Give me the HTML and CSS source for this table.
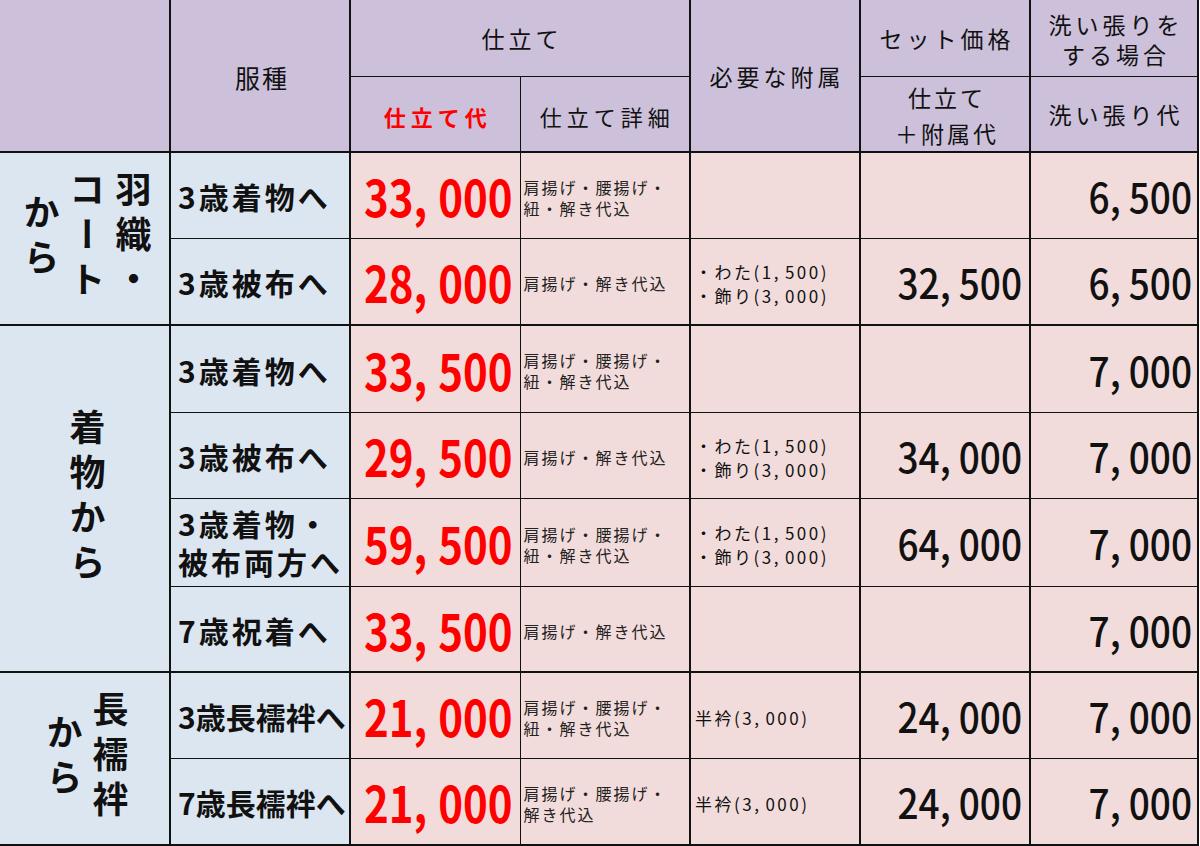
FILE: index.html
```
<!DOCTYPE html>
<html lang="ja">
<head>
<meta charset="utf-8">
<title>仕立て価格表</title>
<link rel="stylesheet" href="styles.css">
</head>
<body>
<table class="price">
  <colgroup>
    <col class="w-group">
    <col class="w-kind">
    <col class="w-std">
    <col class="w-std">
    <col class="w-std">
    <col class="w-std">
    <col class="w-last">
  </colgroup>
  <thead>
    <tr class="hr1">
      <th class="corner" rowspan="2"></th>
      <th class="h-kind tv" rowspan="2">服種</th>
      <th class="tv" colspan="2">仕立て</th>
      <th class="tv" rowspan="2">必要な附属</th>
      <th class="tv">セット価格</th>
      <th class="tv two">洗い張りを<br>する場合</th>
    </tr>
    <tr class="hr2">
      <th class="red tv">仕立て代</th>
      <th class="thin-r">仕立て詳細</th>
      <th class="tv two2">仕立て<br>＋附属代</th>
      <th class="tv">洗い張り代</th>
    </tr>
  </thead>
  <tbody>
    <tr class="r86 gtop">
      <td class="group" rowspan="2"><div class="vwrap"><div class="vt">羽織・<br>コート<br>から</div></div></td>
      <td class="kind">3歳着物へ</td>
      <td class="fee"><span class="big">33<span class="cm">,</span>000</span></td>
      <td class="detail">肩揚げ・腰揚げ・<br>紐・解き代込</td>
      <td class="acc"></td>
      <td class="set"></td>
      <td class="wash"><span class="mid">6<span class="cm">,</span>500</span></td>
    </tr>
    <tr class="r87 gend">
      <td class="kind">3歳被布へ</td>
      <td class="fee"><span class="big">28<span class="cm">,</span>000</span></td>
      <td class="detail">肩揚げ・解き代込</td>
      <td class="acc">・わた(1<span class="cm">,</span>500)<br>・飾り(3<span class="cm">,</span>000)</td>
      <td class="set"><span class="mid">32<span class="cm">,</span>500</span></td>
      <td class="wash"><span class="mid">6<span class="cm">,</span>500</span></td>
    </tr>
    <tr class="r87">
      <td class="group" rowspan="4"><div class="vwrap"><div class="vt">着物から</div></div></td>
      <td class="kind">3歳着物へ</td>
      <td class="fee"><span class="big">33<span class="cm">,</span>500</span></td>
      <td class="detail">肩揚げ・腰揚げ・<br>紐・解き代込</td>
      <td class="acc"></td>
      <td class="set"></td>
      <td class="wash"><span class="mid">7<span class="cm">,</span>000</span></td>
    </tr>
    <tr class="r86">
      <td class="kind">3歳被布へ</td>
      <td class="fee"><span class="big">29<span class="cm">,</span>500</span></td>
      <td class="detail">肩揚げ・解き代込</td>
      <td class="acc">・わた(1<span class="cm">,</span>500)<br>・飾り(3<span class="cm">,</span>000)</td>
      <td class="set"><span class="mid">34<span class="cm">,</span>000</span></td>
      <td class="wash"><span class="mid">7<span class="cm">,</span>000</span></td>
    </tr>
    <tr class="r88">
      <td class="kind two-line">3歳着物・<br>被布両方へ</td>
      <td class="fee"><span class="big">59<span class="cm">,</span>500</span></td>
      <td class="detail">肩揚げ・腰揚げ・<br>紐・解き代込</td>
      <td class="acc">・わた(1<span class="cm">,</span>500)<br>・飾り(3<span class="cm">,</span>000)</td>
      <td class="set"><span class="mid">64<span class="cm">,</span>000</span></td>
      <td class="wash"><span class="mid">7<span class="cm">,</span>000</span></td>
    </tr>
    <tr class="r86 gend">
      <td class="kind">7歳祝着へ</td>
      <td class="fee"><span class="big">33<span class="cm">,</span>500</span></td>
      <td class="detail">肩揚げ・解き代込</td>
      <td class="acc"></td>
      <td class="set"></td>
      <td class="wash"><span class="mid">7<span class="cm">,</span>000</span></td>
    </tr>
    <tr class="r86">
      <td class="group" rowspan="2"><div class="vwrap"><div class="vt">長襦袢<br>から</div></div></td>
      <td class="kind tight">3歳長襦袢へ</td>
      <td class="fee"><span class="big">21<span class="cm">,</span>000</span></td>
      <td class="detail">肩揚げ・腰揚げ・<br>紐・解き代込</td>
      <td class="acc">半衿(3<span class="cm">,</span>000)</td>
      <td class="set"><span class="mid">24<span class="cm">,</span>000</span></td>
      <td class="wash"><span class="mid">7<span class="cm">,</span>000</span></td>
    </tr>
    <tr class="r87 gend">
      <td class="kind tight">7歳長襦袢へ</td>
      <td class="fee"><span class="big">21<span class="cm">,</span>000</span></td>
      <td class="detail">肩揚げ・腰揚げ・<br>解き代込</td>
      <td class="acc">半衿(3<span class="cm">,</span>000)</td>
      <td class="set"><span class="mid">24<span class="cm">,</span>000</span></td>
      <td class="wash"><span class="mid">7<span class="cm">,</span>000</span></td>
    </tr>
  </tbody>
</table>
</body>
</html>
```
FILE: styles.css
```
html, body {
  margin: 0;
  padding: 0;
  background: #ffffff;
}

body {
  font-family: "Noto Sans CJK JP", "Noto Sans", sans-serif;
  color: #111;
}

.price {
  border-collapse: collapse;
  table-layout: fixed;
  width: 1198px;
}

.w-group { width: 170px; }
.w-kind { width: 180px; }
.w-std { width: 170px; }
.w-last { width: 168px; }

.price th,
.price td {
  border: 1px solid #111;
  border-left-width: 2px;
  border-right-width: 2px;
  padding: 0;
  vertical-align: middle;
  overflow: hidden;
}

/* header */
.price th {
  background: #ccc0da;
  font-weight: 400;
  font-size: 23px;
  letter-spacing: 4px;
  padding-left: 4px;
  line-height: 30px;
  text-align: center;
  white-space: nowrap;
  color: #111;
}

.hr1 { height: 76px; }
.hr2 { height: 76px; }
.hr2 th { border-bottom-width: 2px; }

.price th.corner {
  border-top: none;
  border-left: none;
  border-bottom-width: 2px;
}

.price th.h-kind {
  font-size: 25px;
  letter-spacing: 2px;
  border-bottom-width: 2px;
  padding-top: 2px;
}

.hr1 th { border-top: none; }
.hr1 th[rowspan] { border-bottom-width: 2px; }

.price th.red {
  color: #ff0000;
  font-weight: 700;
  font-size: 22px;
  letter-spacing: 5px;
  padding-left: 5px;
  padding-top: 4px;
  border-right-width: 1px;
}

.price th.thin-r {
  border-left-width: 1px;
  font-size: 22px;
  letter-spacing: 5px;
  padding-left: 5px;
  padding-top: 4px;
}

.price th.two {
  line-height: 30px;
  font-size: 23px;
  letter-spacing: 4px;
  padding-left: 4px;
  padding-top: 2px;
}

.price th.two2 {
  line-height: 36px;
  font-size: 23px;
  letter-spacing: 3px;
  padding-top: 2px;
}

/* body rows */
.r86 { height: 86px; }
.r87 { height: 87px; }
.r88 { height: 88px; }

.gend td { border-bottom-width: 2px; }
.price td.group { border-bottom-width: 2px; }

.price td.group {
  background: #dce6f1;
  border-left: none;
}

.vwrap {
  display: flex;
  justify-content: center;
  align-items: center;
  padding-left: 6px;
}

.vt {
  writing-mode: vertical-rl;
  text-align: center;
  font-size: 36px;
  font-weight: 700;
  letter-spacing: 9px;
  line-height: 46px;
  color: #111;
}

.price td.kind {
  background: #dce6f1;
  font-size: 30px;
  font-weight: 700;
  letter-spacing: 3px;
  line-height: 38px;
  padding-left: 7px;
  padding-top: 2px;
  white-space: nowrap;
}

.price td.kind.tight { letter-spacing: 0; }
.price td.kind.two-line { padding-top: 0; }

.price td.fee,
.price td.detail,
.price td.acc,
.price td.set,
.price td.wash {
  background: #f2dcdb;
}

.price td.fee {
  text-align: right;
  padding-right: 7px;
  border-right-width: 1px;
}

.big {
  display: inline-block;
  font-family: "Noto Sans CJK JP", sans-serif;
  font-size: 42px;
  font-weight: 700;
  color: #ff0000;
  line-height: 1;
  transform: scaleY(1.2);
  padding-top: 2px;
}

.big .cm { margin-right: 11px; }

.price td.detail {
  font-size: 16px;
  letter-spacing: 2px;
  line-height: 21px;
  padding-left: 3px;
  padding-top: 5px;
  color: #222;
  white-space: nowrap;
  border-left-width: 1px;
}

.price td.acc {
  font-size: 17px;
  letter-spacing: 2.5px;
  line-height: 24px;
  padding-left: 4px;
  padding-top: 5px;
  color: #111;
  white-space: nowrap;
}

.acc .cm { margin-right: 4px; }

.price td.set {
  text-align: right;
  padding-right: 7px;
}

.price td.wash {
  text-align: right;
  padding-right: 5px;
}

.mid {
  display: inline-block;
  font-family: "Noto Sans CJK JP", sans-serif;
  font-size: 37px;
  font-weight: 500;
  line-height: 1;
  color: #111;
  transform: scaleY(1.1);
  padding-top: 3px;
}

.mid .cm { margin-right: 8px; }
```
